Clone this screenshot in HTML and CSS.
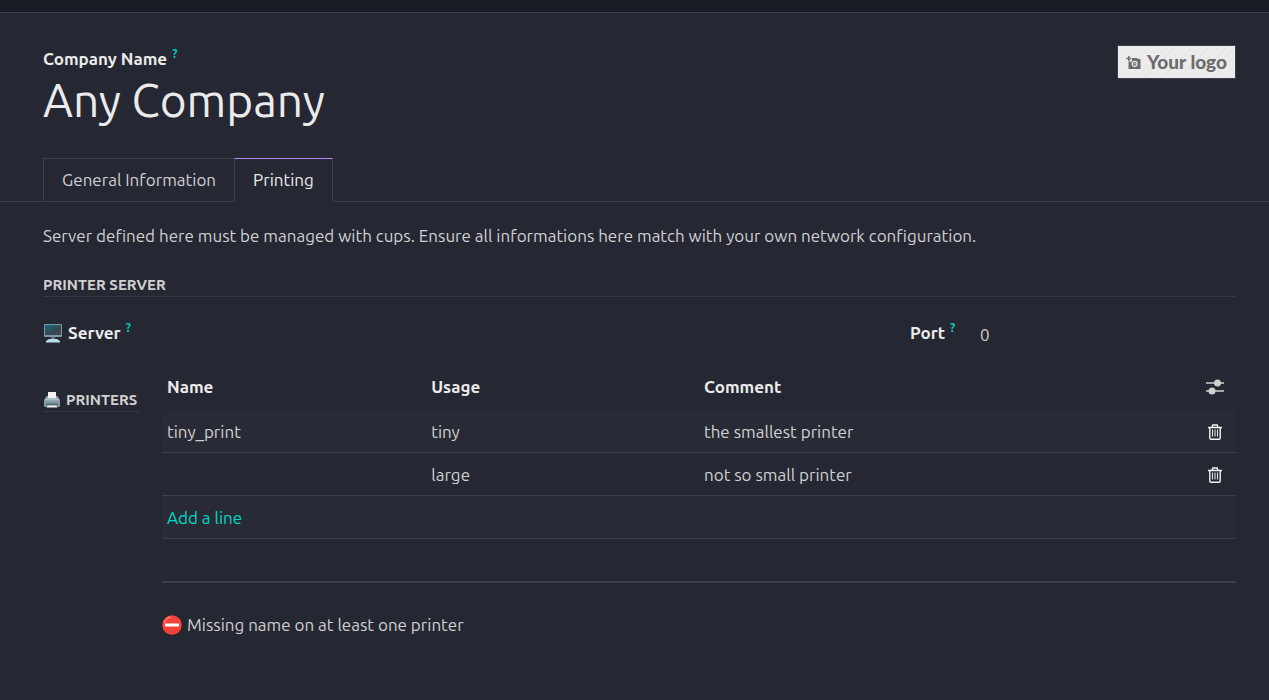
FILE: index.html
```html
<!DOCTYPE html>
<html lang="en">
<head>
<meta charset="utf-8">
<meta name="viewport" content="width=device-width, initial-scale=1">
<title>Any Company</title>
<link rel="stylesheet" href="styles.css">
</head>
<body>
<div class="topbar"></div>
<main class="sheet">
  <header class="head">
    <div class="title">
      <label class="label" for="company">Company Name<sup class="help">?</sup></label>
      <input class="company" id="company" type="text" value="Any Company">
    </div>
    <button class="logo" type="button">
      <svg class="logo-icon" viewBox="0 0 15 15" aria-hidden="true">
        <path fill="#6c6c6c" d="M2.500 6.500H6V3h5l1 1h2.500v10h-12z"/>
        <circle cx="8.600" cy="8.800" r="2.500" fill="#6c6c6c" stroke="#ececec" stroke-width="1.200"/>
        <circle cx="8.600" cy="8.800" r=".8" fill="#ececec"/>
        <path d="M2.800 1v5M.3 3.500h5" stroke="#6c6c6c" stroke-width="1.500"/>
      </svg>
      <span>Your logo</span>
    </button>
  </header>

  <nav class="tabs" role="tablist">
    <button class="tab" type="button" role="tab" aria-selected="false">General Information</button>
    <button class="tab active" type="button" role="tab" aria-selected="true">Printing</button>
  </nav>

  <section class="panel">
    <p class="intro">Server defined here must be managed with cups. Ensure all informations here match with your own network configuration.</p>
    <h2 class="section-title">Printer server</h2>

    <div class="server-row">
      <div class="field server">
        <label class="label" for="server">
          <svg class="emoji" viewBox="0 0 20 20" aria-hidden="true">
            <defs><linearGradient id="screen" x1="0" y1="0" x2="1" y2="1"><stop offset="0" stop-color="#176b7c"/><stop offset=".6" stop-color="#37474f"/><stop offset="1" stop-color="#424b50"/></linearGradient></defs>
            <rect x="1" y="1" width="18" height="13" rx="1" fill="#7c9aa6"/>
            <rect x="2" y="2" width="16" height="10" fill="url(#screen)"/>
            <path d="M8 14h4v3H8z" fill="#56727e"/>
            <path d="M6 16h8l3 2v1.500H3V18z" fill="#b9dcec"/>
          </svg>
          Server<sup class="help">?</sup></label>
        <input class="value" id="server" type="text">
      </div>
      <div class="field port">
        <label class="label" for="port">Port<sup class="help">?</sup></label>
        <input class="value" id="port" type="text" value="0">
      </div>
    </div>

    <div class="printers">
      <h2 class="section-title printers-title">
        <svg class="emoji small" viewBox="0 0 18 18" aria-hidden="true">
          <path d="M5 1h8v6H5z" fill="#f3f3f3"/>
          <path d="M3.500 5H5v2h8V5h1.500L17 9v6l-1 1H2l-1-1V9z" fill="#829ba6"/>
          <path d="M3 7h12l1 2.500H2z" fill="#a9c0ca"/>
          <path d="M3 12.500h12v2H3z" fill="#526a75"/>
          <path d="M4.500 14.500h9l.6 2H3.900z" fill="#f0f0f0"/>
        </svg>
        Printers</h2>
      <div class="list">
        <table class="table">
          <thead>
            <tr>
              <th class="col-name">Name</th>
              <th class="col-usage">Usage</th>
              <th>Comment</th>
              <th class="col-action">
                <button class="icon-btn" type="button" aria-label="Columns">
                  <svg class="sliders" viewBox="0 0 18 16" aria-hidden="true">
                    <path d="M0 4h18M0 12h18" stroke="#cfcfcf" stroke-width="1.600"/>
                    <circle cx="11.500" cy="4" r="3.500" fill="#d0d0d0"/>
                    <circle cx="6" cy="12" r="3.500" fill="#d0d0d0"/>
                  </svg>
                </button>
              </th>
            </tr>
          </thead>
          <tbody>
            <tr>
              <td>tiny_print</td>
              <td>tiny</td>
              <td>the smallest printer</td>
              <td class="col-action"><button class="icon-btn" type="button" aria-label="Delete tiny"><svg class="trash" viewBox="0 0 14 16" aria-hidden="true"><use href="#trash"/></svg></button></td>
            </tr>
            <tr>
              <td></td>
              <td>large</td>
              <td>not so small printer</td>
              <td class="col-action"><button class="icon-btn" type="button" aria-label="Delete large"><svg class="trash" viewBox="0 0 14 16" aria-hidden="true"><use href="#trash"/></svg></button></td>
            </tr>
            <tr>
              <td colspan="4"><a class="add" href="#">Add a line</a></td>
            </tr>
            <tr class="blank">
              <td colspan="4"></td>
            </tr>
          </tbody>
        </table>
        <p class="warning">
          <svg class="emoji" viewBox="0 0 20 20" aria-hidden="true">
            <circle cx="10" cy="10" r="9.800" fill="#f44336"/>
            <path d="M2.500 7.500Q4 3 8.500 2" fill="none" stroke="#ff7a70" stroke-width="1.300" stroke-linecap="round"/>
            <rect x="3" y="8.500" width="14" height="3" rx=".5" fill="#fff"/>
          </svg>
          Missing name on at least one printer</p>
      </div>
    </div>
  </section>
</main>
<svg class="defs" width="0" height="0" aria-hidden="true">
  <symbol id="trash" viewBox="0 0 14 16">
    <path d="M0 3.500h14M4 3.500L4.800 1h4.400L10 3.500M1.800 3.500V14q0 1.200 1.200 1.200h8Q12.200 15.200 12.200 14V3.500" fill="none" stroke="#f4f4f4" stroke-width="1.400"/>
    <path d="M4.500 5.500v7M7 5.500v7M9.500 5.500v7" stroke="#e4e4e4" stroke-width="1.100"/>
  </symbol>
</svg>
</body>
</html>
```

FILE: styles.css
```css
* {
  box-sizing: border-box;
}

body {
  margin: 0;
  background: #252733;
  color: #d0d0d0;
  font: 17px/24px Ubuntu, "Noto Sans", sans-serif;
}

button,
input {
  font: inherit;
  color: inherit;
  background: none;
  border: 0;
  margin: 0;
  padding: 0;
}

button {
  cursor: pointer;
}

.topbar {
  height: 13px;
  background: #1a1d25;
  border-bottom: 1px solid #3c3e4b;
}

.head {
  display: flex;
  justify-content: space-between;
  align-items: flex-start;
  padding: 32px 33px 0 43px;
}

.title {
  flex: 1;
}

.label {
  display: flex;
  align-items: center;
  color: #ebebeb;
  font-weight: 600;
}

.title .label {
  padding-top: 2px;
}

.help {
  align-self: flex-start;
  margin-left: 5px;
  color: #02c7b5;
  font-size: 12px;
  line-height: 14px;
}

.company {
  display: block;
  width: 100%;
  height: 58px;
  color: #ebebeb;
  font-size: 46px;
  line-height: 58px;
}

.logo {
  display: flex;
  align-items: center;
  justify-content: center;
  gap: 6px;
  height: 34px;
  padding: 0 8px;
  border: 1px solid #3c3e4b;
  background: repeating-linear-gradient(135deg, #ececec 0 5px, #e6e6e6 5px 6px);
  color: #6c6c6c;
  font: 900 19px/24px Lato, sans-serif;
}

.logo-icon {
  width: 15px;
  height: 15px;
}

.tabs {
  display: flex;
  margin-top: 29px;
  padding-left: 43px;
  border-bottom: 1px solid #3c3e4b;
}

.tab {
  height: 44px;
  margin-bottom: -1px;
  padding: 0 18px;
  border: 1px solid #3c3e4b;
}

.tab.active {
  margin-left: -1px;
  border-top-color: #b48af0;
  border-bottom-color: #252733;
  color: #ebebeb;
}

.panel {
  padding: 22px 33px 0 43px;
}

.intro {
  margin: 0;
}

.section-title {
  display: flex;
  align-items: center;
  margin: 25px 0 0;
  border-bottom: 1px solid #353744;
  font-size: 15px;
  line-height: 23px;
  font-weight: 700;
  text-transform: uppercase;
}

.server-row {
  display: flex;
  padding-top: 22px;
}

.field {
  display: flex;
  align-items: center;
}

.server {
  flex: 867 1 0;
}

.port {
  flex: 326 1 0;
}

.server .label {
  width: 119px;
}

.port .label {
  width: 70px;
}

.value {
  flex: 1;
  min-width: 0;
  height: 28px;
  padding-top: 2px;
}

.emoji {
  flex: none;
  width: 20px;
  height: 20px;
  margin-right: 5px;
}

.emoji.small {
  width: 18px;
  height: 18px;
}

.printers {
  display: flex;
  align-items: flex-start;
  gap: 23px;
  padding-top: 17px;
}

.printers-title {
  flex: none;
  width: 96px;
  margin-top: 24px;
}

.list {
  flex: 1;
}

.table {
  width: 100%;
  table-layout: fixed;
  border-collapse: separate;
  border-spacing: 0;
}

.table th,
.table td {
  height: 43px;
  padding: 2px 5px 0;
  text-align: left;
  vertical-align: middle;
}

.table th {
  height: 46px;
  padding-top: 0;
  color: #ebebeb;
  font-weight: 600;
}

.table td {
  border-bottom: 1px solid #3c3e4b;
}

.table tbody tr:nth-child(odd) td {
  background: #282a36;
}

.table .blank td {
  height: 44px;
  border-bottom-width: 2px;
}

.col-name {
  width: 24.6%;
}

.col-usage {
  width: 25.4%;
}

.table .col-action {
  width: 43px;
  padding-left: 0;
  padding-right: 0;
}

.icon-btn {
  display: flex;
  width: 100%;
  height: 24px;
  align-items: center;
  justify-content: center;
}

.sliders {
  width: 18px;
  height: 16px;
}

.trash {
  width: 14px;
  height: 16px;
}

.add {
  color: #01d9c3;
  text-decoration: none;
}

.warning {
  display: flex;
  align-items: center;
  margin: 30px 0 0;
}

.defs {
  display: block;
}
```
